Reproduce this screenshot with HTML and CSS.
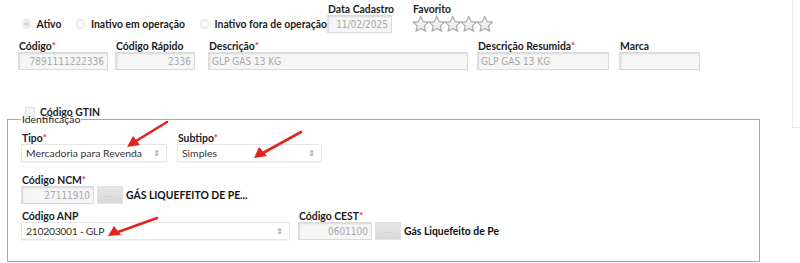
FILE: index.html
```html
<!DOCTYPE html>
<html lang="pt-BR">
<head>
  <meta charset="UTF-8">
  <title>Cadastro de Produto</title>
  <link rel="stylesheet" href="styles.css">
</head>
<body>

<div class="page">
  <div class="main">

    <div class="row row-top">
      <div class="status">
        <span class="radio checked"></span><span class="opt">Ativo</span>
        <span class="radio"></span><span class="opt">Inativo em operação</span>
        <span class="radio"></span><span class="opt">Inativo fora de operação</span>
      </div>
      <div class="field f-data">
        <label>Data Cadastro</label>
        <input type="text" class="txt right w-data" value="11/02/2025" disabled>
      </div>
      <div class="field f-fav">
        <label>Favorito</label>
        <div class="stars">
          <svg width="84" height="18" viewBox="0 0 84 18">
            <defs>
              <linearGradient id="sg" x1="0" y1="0" x2="0" y2="1">
                <stop offset="0" stop-color="#ffffff"/>
                <stop offset="1" stop-color="#e2e2e2"/>
              </linearGradient>
              <polygon id="star" points="8,0.6 10.3,5.6 15.8,6.1 11.6,9.8 12.9,15.3 8,12.4 3.1,15.3 4.4,9.8 0.2,6.1 5.7,5.6"/>
            </defs>
            <g fill="url(#sg)" stroke="#a4a4a4" stroke-width="1.1" stroke-linejoin="round">
              <use href="#star" x="0.8" y="1"/>
              <use href="#star" x="16.8" y="1"/>
              <use href="#star" x="32.8" y="1"/>
              <use href="#star" x="48.8" y="1"/>
              <use href="#star" x="64.8" y="1"/>
            </g>
          </svg>
        </div>
      </div>
    </div>

    <div class="row row-main">
      <div class="field f-cod">
        <label>Código<span class="req">*</span></label>
        <input type="text" class="txt right w-cod" value="7891111222336" disabled>
      </div>
      <div class="field f-rap">
        <label>Código Rápido</label>
        <input type="text" class="txt right w-rap" value="2336" disabled>
      </div>
      <div class="field f-desc">
        <label>Descrição<span class="req">*</span></label>
        <input type="text" class="txt w-desc" value="GLP GAS 13 KG" disabled>
      </div>
      <div class="field f-res">
        <label>Descrição Resumida<span class="req">*</span></label>
        <input type="text" class="txt w-res" value="GLP GAS 13 KG" disabled>
      </div>
      <div class="field">
        <label>Marca</label>
        <input type="text" class="txt w-marca" value="" disabled>
      </div>
    </div>

    <div class="gtin">
      <span class="check"></span><span class="opt">Código GTIN</span>
    </div>

    <fieldset class="box">
      <legend>Identificação</legend>

      <div class="row row-tipo">
        <div class="field f-tipo">
          <label>Tipo<span class="req">*</span></label>
          <div class="select w-tipo"><span>Mercadoria para Revenda</span><span class="caret">&#8661;</span></div>
        </div>
        <div class="field">
          <label>Subtipo<span class="req">*</span></label>
          <div class="select w-sub"><span>Simples</span><span class="caret">&#8661;</span></div>
        </div>
      </div>

      <div class="row row-ncm">
        <div class="field">
          <label>Código NCM<span class="req">*</span></label>
          <div class="lookup">
            <input type="text" class="txt right w-ncm" value="27111910" disabled>
            <button class="dots" disabled>....</button>
            <span class="desc">GÁS LIQUEFEITO DE PE...</span>
          </div>
        </div>
      </div>

      <div class="row row-anp">
        <div class="field f-anp">
          <label>Código ANP</label>
          <div class="select w-anp"><span class="num">210203001 - GLP</span><span class="caret">&#8661;</span></div>
        </div>
        <div class="field">
          <label>Código CEST<span class="req">*</span></label>
          <div class="lookup">
            <input type="text" class="txt right w-cest" value="0601100" disabled>
            <button class="dots" disabled>....</button>
            <span class="desc">Gás Liquefeito de Pe</span>
          </div>
        </div>
      </div>
    </fieldset>

  </div>
  <div class="side"></div>

  <!-- setas de destaque -->
  <svg class="marks" width="800" height="263" viewBox="0 0 800 263">
    <g stroke="#e5231d" stroke-width="2.6" stroke-linecap="round" fill="#e5231d">
      <line x1="167" y1="122" x2="136" y2="141"/>
      <polygon points="127,147 133,136 140,145" stroke="none"/>
      <line x1="301" y1="132" x2="263" y2="153"/>
      <polygon points="254,158 259,147 267,156" stroke="none"/>
      <line x1="157" y1="218" x2="118" y2="232"/>
      <polygon points="108,236 114,226 121,235" stroke="none"/>
    </g>
  </svg>
</div>

</body>
</html>
```

FILE: styles.css
```css
body {
  margin: 0;
  background: #fff;
  font-family: Lato, 'DejaVu Sans Condensed', sans-serif;
  font-size: 10.4px;
  color: #222;
}

.page {
  position: relative;
  display: flex;
  width: 800px;
  height: 263px;
  overflow: hidden;
}

.main {
  width: 792px;
  padding-top: 3px;
}

.side {
  width: 7px;
  height: 127px;
  border: 1px solid #ececec;
  border-right: none;
  border-top: none;
}

.row {
  display: flex;
  align-items: flex-end;
}

.field {
  display: flex;
  flex-direction: column;
}

.field label {
  display: block;
  height: 12px;
  line-height: 12px;
  font-weight: bold;
  padding-left: 1px;
  white-space: nowrap;
}

.req {
  color: #e8323c;
  font-size: 10px;
  font-weight: bold;
  vertical-align: top;
  line-height: 10px;
}

/* status radios */
.status {
  box-sizing: border-box;
  width: 327px;
  display: flex;
  align-items: center;
  height: 18px;
  padding-left: 22px;
}

.radio {
  width: 8px;
  height: 8px;
  border: 1px solid #e2e2e2;
  border-radius: 50%;
  background: radial-gradient(circle, #fff 0, #f2f2f2 70%);
  margin-right: 6px;
}

.radio.checked {
  background: radial-gradient(circle, #cfcfcf 0, #dedede 35%, #f4f4f4 60%);
}

.opt {
  font-weight: bold;
  margin-right: 15px;
  white-space: nowrap;
}

.status .opt:last-child {
  margin-right: 0;
}

.f-data { margin-right: 18px; }

.stars {
  height: 18px;
  display: flex;
  align-items: center;
}

/* inputs */
.txt {
  box-sizing: border-box;
  height: 18px;
  margin: 0;
  padding: 0 3px;
  border: 1px solid #dadada;
  background: #f6f6f6;
  box-shadow: inset 1px 1px 2px rgba(0, 0, 0, 0.12);
  font-family: 'DejaVu Sans Condensed', sans-serif;
  font-size: 10px;
  color: #a9a9a9;
}

.txt.right { text-align: right; }

.w-data { width: 65px; }
.w-cod { width: 90px; }
.w-rap { width: 80px; }
.w-desc { width: 260px; }
.w-res { width: 132px; }
.w-marca { width: 81px; }
.w-ncm { width: 73px; }
.w-cest { width: 74px; }

.row-main {
  margin-top: 7px;
  padding-left: 18px;
}

.f-cod { margin-right: 7px; }
.f-rap { margin-right: 13px; }
.f-desc { margin-right: 9px; }
.f-res { margin-right: 10px; }

/* GTIN */
.gtin {
  display: flex;
  align-items: center;
  height: 3px;
  margin-top: 40px;
  padding-left: 25px;
  line-height: 12px;
}

.check {
  width: 8px;
  height: 8px;
  border: 1px solid #e0e0e0;
  background: #f6f6f6;
  margin-right: 5px;
}

/* fieldset */
.box {
  box-sizing: border-box;
  width: 753px;
  margin: 0 0 0 7px;
  padding: 0 12px 21px 13px;
  border: 1px solid #a8a8a8;
}

.box legend {
  padding: 0 1px;
  line-height: 12px;
  font-weight: normal;
  color: #222;
}

.row-tipo { margin-top: 7px; }
.row-ncm { margin-top: 12px; }
.row-anp { margin-top: 6px; }

.f-tipo { margin-right: 10px; }
.f-anp { margin-right: 8px; }

.select {
  box-sizing: border-box;
  height: 18px;
  display: flex;
  align-items: center;
  justify-content: space-between;
  padding: 0 6px 0 4px;
  border: 1px solid #e6e6e6;
  background: #fff;
  box-shadow: 0 1px 1px rgba(0, 0, 0, 0.04);
  color: #333;
  white-space: nowrap;
}

.num {
  letter-spacing: -0.3px;
}

.caret {
  font-family: 'DejaVu Sans', sans-serif;
  font-size: 8px;
  color: #888;
}

.w-tipo { width: 146px; }
.w-sub { width: 145px; }
.w-anp { width: 269px; }

.lookup {
  display: flex;
  align-items: center;
}

.dots {
  box-sizing: border-box;
  width: 26px;
  height: 18px;
  margin: 0 3px;
  padding: 0;
  border: 1px solid #e2e2e2;
  background: linear-gradient(#e6e6e6, #d8d8d8);
  color: #b8b8b8;
  font-size: 8px;
  line-height: 10px;
}

.desc {
  font-weight: bold;
  color: #111;
  white-space: nowrap;
}

.marks {
  position: absolute;
  left: 0;
  top: 0;
  pointer-events: none;
}
```
